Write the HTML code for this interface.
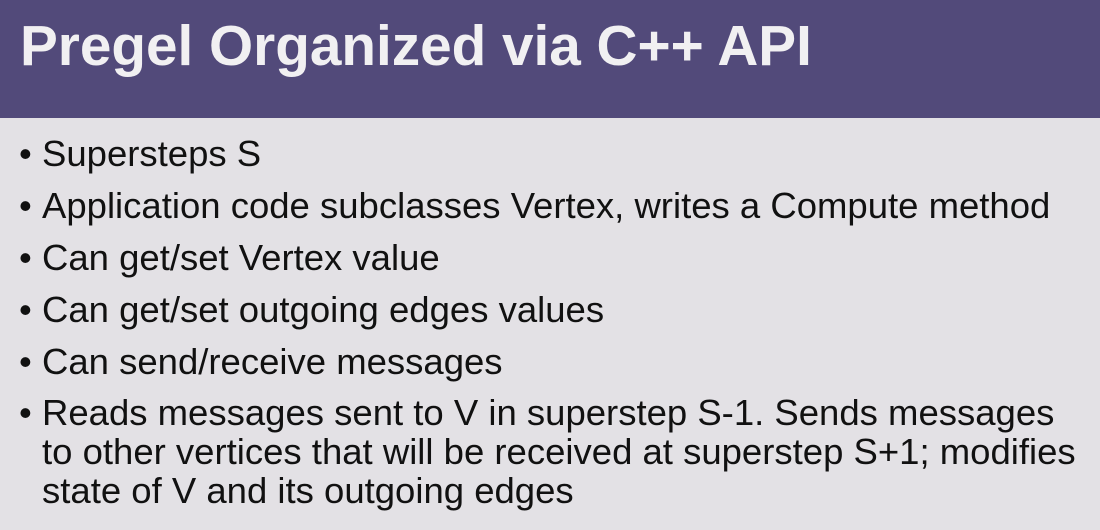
<!DOCTYPE html>
<html><head><style>
body{margin:0;width:1100px;height:530px;background:#e3e1e5;font-family:"Liberation Sans",Arial,sans-serif;overflow:hidden;position:relative}
.h{position:absolute;left:0;top:0;width:1100px;height:118px;background:#524a7a}
.t{position:absolute;left:20px;top:15px;color:#f1f0f2;font-weight:bold;font-size:56.7px;line-height:64px;white-space:nowrap}
.l{position:absolute;left:42px;font-size:36.5px;line-height:39px;color:#111;white-space:nowrap}
.l:before{content:"•";position:absolute;left:-23px}
</style></head><body>
<div class="h"></div>
<div class="t">Pregel Organized via C++ API</div>
<div class="l" style="top:134px">Supersteps S</div>
<div class="l" style="top:186px">Application code subclasses Vertex, writes a Compute method</div>
<div class="l" style="top:238px">Can get/set Vertex value</div>
<div class="l" style="top:290px">Can get/set outgoing edges values</div>
<div class="l" style="top:342px">Can send/receive messages</div>
<div class="l" style="top:393px">Reads messages sent to V in superstep S-1. Sends messages<br>to other vertices that will be received at superstep S+1; modifies<br>state of V and its outgoing edges</div>
</body></html>
